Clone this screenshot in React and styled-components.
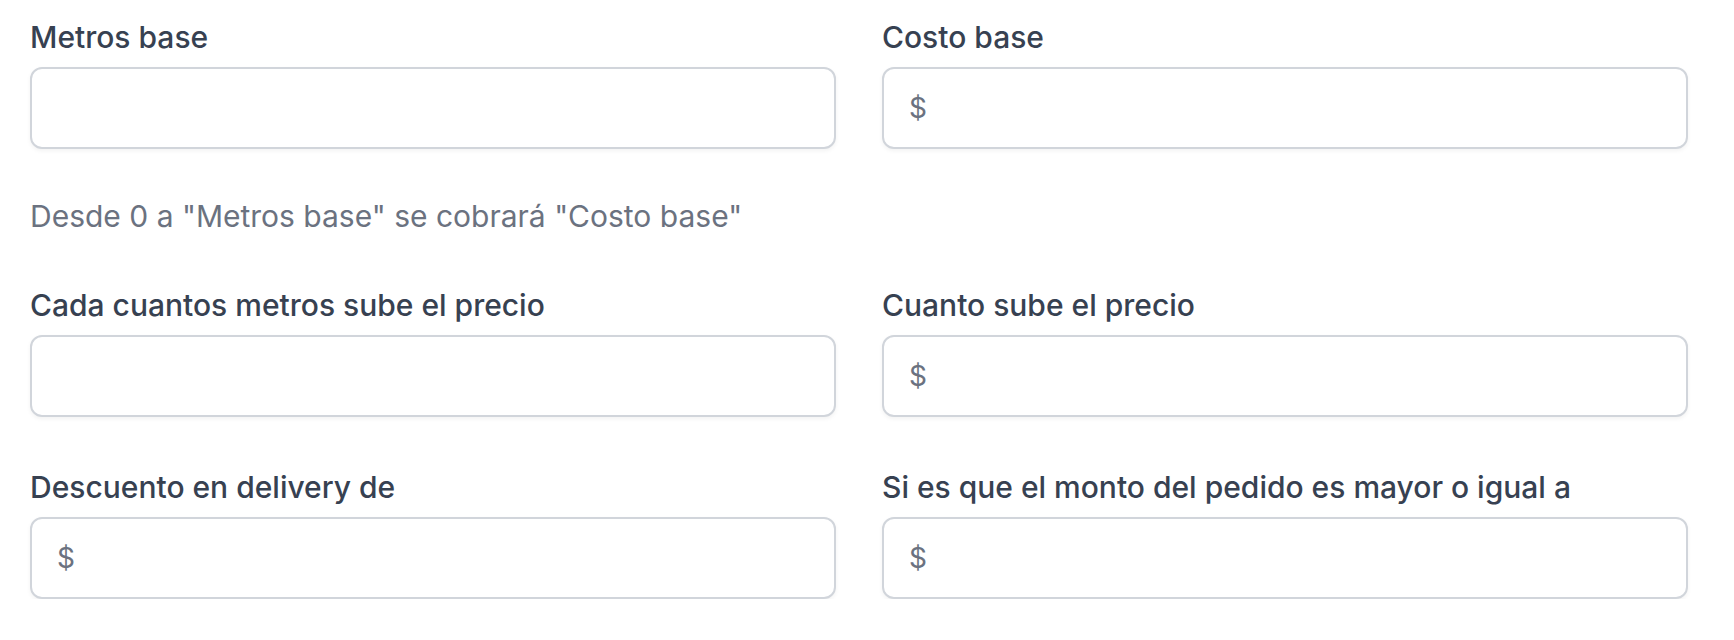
import React from 'react'
import styled, { createGlobalStyle } from 'styled-components'

const GlobalStyle = createGlobalStyle`
  body {
    margin: 0;
    background: #fff;
    font-family: Inter, "Liberation Sans", sans-serif;
  }
  * { box-sizing: border-box; }
`

const Form = styled.form`
  display: grid;
  grid-template-columns: 806px 806px;
  column-gap: 46px;
  row-gap: 48px;
  padding: 15px 46px 0 30px;
`

const Field = styled.div`
  display: flex;
  flex-direction: column;
`

const Label = styled.label`
  font-size: 30px;
  line-height: 45px;
  font-weight: 500;
  color: #374151;
  margin-bottom: 7px;
`

const Help = styled.p`
  grid-column: 1 / -1;
  margin: 0;
  font-size: 30px;
  line-height: 38px;
  color: #6b7280;
`

const InputBox = styled.div`
  display: flex;
  align-items: center;
  height: 82px;
  border: 2px solid #d1d5db;
  border-radius: 12px;
  box-shadow: 0 2px 4px rgba(0, 0, 0, 0.05);
  background: #fff;
  padding: 0 25px;
`

const Prefix = styled.span`
  font-size: 28px;
  color: #6b7280;
  margin-right: 8px;
`

const Input = styled.input`
  flex: 1;
  border: none;
  outline: none;
  background: transparent;
  font-family: inherit;
  font-size: 28px;
  color: #111827;
  min-width: 0;
`

const MoneyOrPlain = ({ label, money }) => (
  <Field>
    <Label>{label}</Label>
    <InputBox>
      {money && <Prefix>$</Prefix>}
      <Input type="text" />
    </InputBox>
  </Field>
)

const App = () => {
  return (
    <>
      <GlobalStyle />
      <Form onSubmit={e => e.preventDefault()}>
        <MoneyOrPlain label="Metros base" />
        <MoneyOrPlain label="Costo base" money />
        <Help>Desde 0 a "Metros base" se cobrará "Costo base"</Help>
        <MoneyOrPlain label="Cada cuantos metros sube el precio" />
        <MoneyOrPlain label="Cuanto sube el precio" money />
        <MoneyOrPlain label="Descuento en delivery de" money />
        <MoneyOrPlain label="Si es que el monto del pedido es mayor o igual a" money />
      </Form>
    </>
  )
}

export default App
